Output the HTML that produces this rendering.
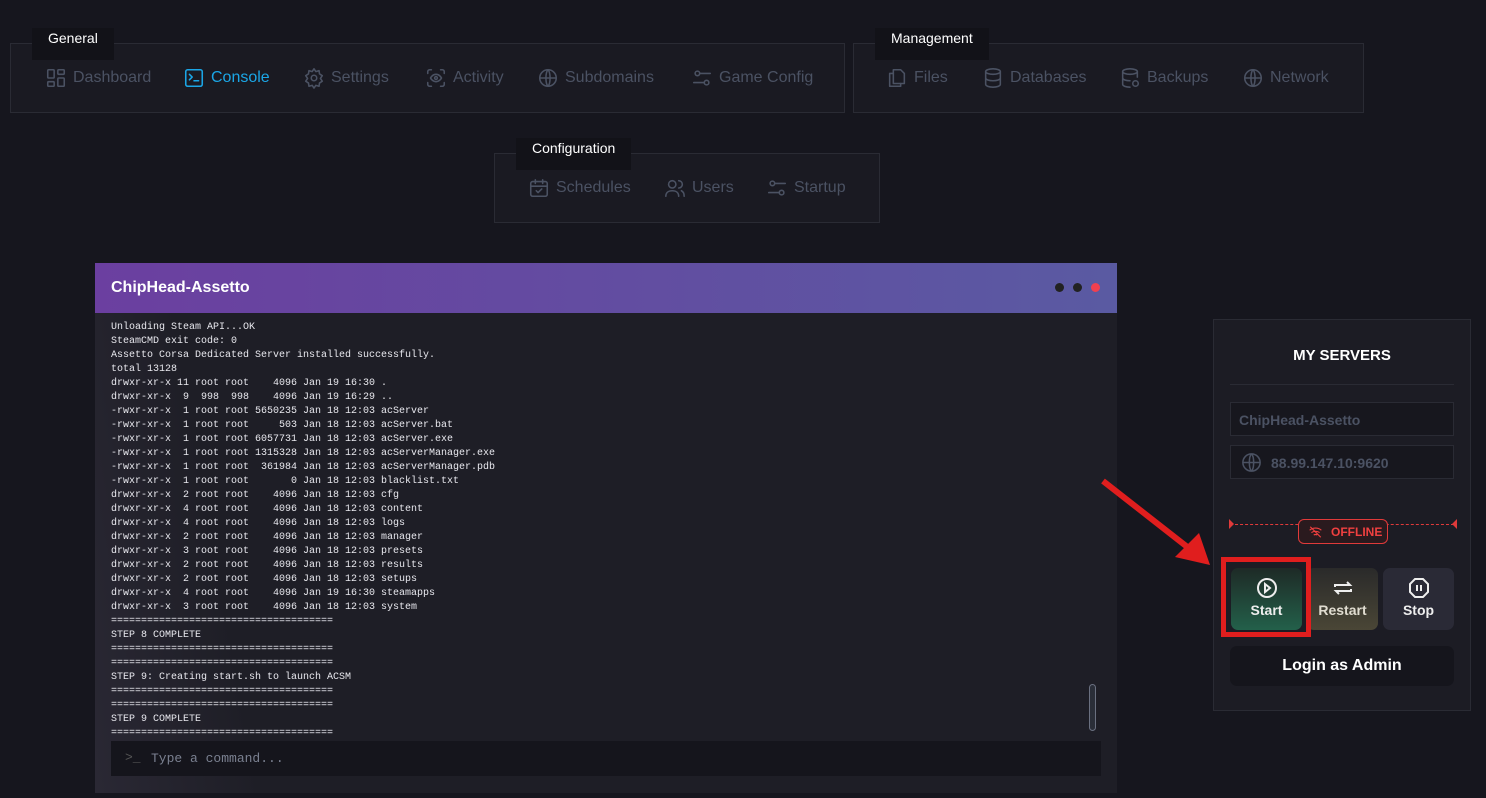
<!DOCTYPE html>
<html><head><meta charset="utf-8"><style>
*{box-sizing:border-box;margin:0;padding:0}
body{width:1486px;height:798px;background:#16161e;font-family:"Liberation Sans",sans-serif;position:relative;overflow:hidden}
.box{position:absolute;border:1px solid #2a2b34;background:#1a1a22}
.lbl{position:absolute;top:-16px;background:#121218;color:#fff;font-size:14px;padding:2px 16px 14px;}
.it{position:absolute;top:23px;display:flex;align-items:center;color:#4b5263;font-size:16px;gap:6px}
.it svg{width:22px;height:22px;fill:none;stroke:#4b5263;stroke-width:1.7;stroke-linecap:round;stroke-linejoin:round}
.act{color:#1ba6e6}.act svg{stroke:#1ba6e6}
.con{position:absolute;left:95px;top:263px;width:1022px;height:530px;background:linear-gradient(80deg,#2a2834 0%,#1e1e26 15%,#1e1e26 100%)}
.hd{height:50px;background:linear-gradient(90deg,#6b3fa0,#5a5aa2);color:#fff;font-weight:bold;font-size:16px;padding:16px 16px}
.dot{position:absolute;top:20px;width:9px;height:9px;border-radius:50%;background:#222}
pre{position:absolute;left:16px;top:58px;font-family:"Liberation Mono",monospace;font-size:10px;line-height:14px;color:#e8e8ee}
.inp{position:absolute;left:16px;top:478px;width:990px;height:35px;background:#15151c;color:#7a8090;font-family:"Liberation Mono",monospace;font-size:13px;padding:10px 40px}
.pn{position:absolute;left:1213px;top:319px;width:258px;height:392px;background:#1c1c24;border:1px solid #2a2b34}
.fld{position:absolute;left:16px;width:224px;height:34px;border:1px solid #2a2b34;background:#17171e;color:#4b5263;font-weight:bold;font-size:14px;padding:9px 8px}
.bt{position:absolute;top:248px;width:71px;height:62px;border-radius:7px;color:#eee;font-weight:bold;font-size:14px;text-align:center;padding-top:8px}
.bt svg{display:block;margin:0 auto 2px;width:24px;height:24px;fill:none;stroke:#eee;stroke-width:2}
</style></head><body>
<div class="box" style="left:10px;top:43px;width:835px;height:70px"><div class="lbl" style="left:21px">General</div>
<div class="it" style="left:34px"><svg viewBox="0 0 24 24"><rect x="3" y="3" width="7" height="9" rx="1"/><rect x="14" y="3" width="7" height="5" rx="1"/><rect x="14" y="12" width="7" height="9" rx="1"/><rect x="3" y="16" width="7" height="5" rx="1"/></svg>Dashboard</div>
<div class="it act" style="left:172px"><svg viewBox="0 0 24 24"><rect x="3" y="3" width="18" height="18" rx="2"/><path d="M7 8l3 3-3 3M12 15h5"/></svg>Console</div>
<div class="it" style="left:292px"><svg viewBox="0 0 24 24"><circle cx="12" cy="12" r="3"/><path d="M12 2l2 3 3.5-1 .5 3.5 3 2-2 3 2 3-3 2-.5 3.5-3.5-1-2 3-2-3-3.5 1-.5-3.5-3-2 2-3-2-3 3-2 .5-3.5 3.5 1z"/></svg>Settings</div>
<div class="it" style="left:414px"><svg viewBox="0 0 24 24"><path d="M3 7V5a2 2 0 012-2h2M17 3h2a2 2 0 012 2v2M21 17v2a2 2 0 01-2 2h-2M7 21H5a2 2 0 01-2-2v-2"/><path d="M6 12s2-4 6-4 6 4 6 4-2 4-6 4-6-4-6-4z"/><circle cx="12" cy="12" r="1.5"/></svg>Activity</div>
<div class="it" style="left:526px"><svg viewBox="0 0 24 24"><circle cx="12" cy="12" r="9"/><path d="M3 12h18M12 3c3 3 3 15 0 18M12 3c-3 3-3 15 0 18"/></svg>Subdomains</div>
<div class="it" style="left:680px"><svg viewBox="0 0 24 24"><circle cx="7" cy="7" r="2.5"/><path d="M10 7h11M3 17h11"/><circle cx="17" cy="17" r="2.5"/></svg>Game Config</div>
</div>
<div class="box" style="left:853px;top:43px;width:511px;height:70px"><div class="lbl" style="left:21px">Management</div>
<div class="it" style="left:32px"><svg viewBox="0 0 24 24"><path d="M8 7V3h8l4 4v11H8z"/><path d="M8 7H4v14h12v-3"/></svg>Files</div>
<div class="it" style="left:128px"><svg viewBox="0 0 24 24"><ellipse cx="12" cy="5" rx="8" ry="3"/><path d="M4 5v14c0 1.7 3.6 3 8 3s8-1.3 8-3V5M4 12c0 1.7 3.6 3 8 3s8-1.3 8-3"/></svg>Databases</div>
<div class="it" style="left:265px"><svg viewBox="0 0 24 24"><ellipse cx="12" cy="5" rx="8" ry="3"/><path d="M4 5v14c0 1.7 3.6 3 8 3M20 5v6M4 12c0 1.7 3.6 3 8 3"/><path d="M15 18a3 3 0 106 0 3 3 0 00-6 0"/></svg>Backups</div>
<div class="it" style="left:388px"><svg viewBox="0 0 24 24"><circle cx="12" cy="12" r="9"/><path d="M3 12h18M12 3c3 3 3 15 0 18M12 3c-3 3-3 15 0 18"/></svg>Network</div>
</div>
<div class="box" style="left:494px;top:153px;width:386px;height:70px"><div class="lbl" style="left:21px">Configuration</div>
<div class="it" style="left:33px"><svg viewBox="0 0 24 24"><rect x="3" y="5" width="18" height="16" rx="2"/><path d="M8 3v4M16 3v4M3 10h18M9 15l2 2 4-4"/></svg>Schedules</div>
<div class="it" style="left:169px"><svg viewBox="0 0 24 24"><circle cx="9" cy="8" r="4"/><path d="M2 21c0-4 3-6 7-6s7 2 7 6M16 4a4 4 0 010 8M19 15c2 1 3 3 3 6"/></svg>Users</div>
<div class="it" style="left:271px"><svg viewBox="0 0 24 24"><circle cx="7" cy="7" r="2.5"/><path d="M10 7h11M3 17h11"/><circle cx="17" cy="17" r="2.5"/></svg>Startup</div>
</div>
<div class="con"><div class="hd">ChipHead-Assetto</div>
<div class="dot" style="position:fixed;left:1055px;top:283px"></div>
<div class="dot" style="position:fixed;left:1073px;top:283px"></div>
<div class="dot" style="position:fixed;left:1091px;top:283px;background:#f04050"></div>
<pre>Unloading Steam API...OK
SteamCMD exit code: 0
Assetto Corsa Dedicated Server installed successfully.
total 13128
drwxr-xr-x 11 root root    4096 Jan 19 16:30 .
drwxr-xr-x  9  998  998    4096 Jan 19 16:29 ..
-rwxr-xr-x  1 root root 5650235 Jan 18 12:03 acServer
-rwxr-xr-x  1 root root     503 Jan 18 12:03 acServer.bat
-rwxr-xr-x  1 root root 6057731 Jan 18 12:03 acServer.exe
-rwxr-xr-x  1 root root 1315328 Jan 18 12:03 acServerManager.exe
-rwxr-xr-x  1 root root  361984 Jan 18 12:03 acServerManager.pdb
-rwxr-xr-x  1 root root       0 Jan 18 12:03 blacklist.txt
drwxr-xr-x  2 root root    4096 Jan 18 12:03 cfg
drwxr-xr-x  4 root root    4096 Jan 18 12:03 content
drwxr-xr-x  4 root root    4096 Jan 18 12:03 logs
drwxr-xr-x  2 root root    4096 Jan 18 12:03 manager
drwxr-xr-x  3 root root    4096 Jan 18 12:03 presets
drwxr-xr-x  2 root root    4096 Jan 18 12:03 results
drwxr-xr-x  2 root root    4096 Jan 18 12:03 setups
drwxr-xr-x  4 root root    4096 Jan 19 16:30 steamapps
drwxr-xr-x  3 root root    4096 Jan 18 12:03 system
=====================================
STEP 8 COMPLETE
=====================================
=====================================
STEP 9: Creating start.sh to launch ACSM
=====================================
=====================================
STEP 9 COMPLETE
=====================================</pre>
<div style="position:absolute;left:994px;top:421px;width:7px;height:47px;border:1px solid #6a7080;border-radius:4px;background:#2a2e38"></div>
<div class="inp"><span style="position:absolute;left:14px;top:9px;color:#555">&gt;_</span>Type a command...</div>
</div>
<div class="pn">
<div style="position:absolute;top:27px;width:100%;text-align:center;color:#fff;font-weight:bold;font-size:15px">MY SERVERS</div>
<div style="position:absolute;left:16px;top:64px;width:224px;height:1px;background:#2a2b34"></div>
<div class="fld" style="top:82px">ChipHead-Assetto</div>
<div class="fld" style="top:125px;padding-left:40px"><svg style="position:absolute;left:9px;top:5px;width:23px;height:23px;fill:none;stroke:#4b5263;stroke-width:1.6" viewBox="0 0 24 24"><circle cx="12" cy="12" r="9"/><path d="M3 12h18M12 3c3 3 3 15 0 18M12 3c-3 3-3 15 0 18"/></svg>88.99.147.10:9620</div>
<div style="position:absolute;left:16px;top:204px;width:224px;border-top:1px dashed #e03a3a"></div>
<div style="position:absolute;left:15px;top:199px;width:0;height:0;border-top:5px solid transparent;border-bottom:5px solid transparent;border-left:5px solid #e03a3a"></div>
<div style="position:absolute;left:238px;top:199px;width:0;height:0;border-top:5px solid transparent;border-bottom:5px solid transparent;border-right:5px solid #e03a3a"></div>
<div style="position:absolute;left:84px;top:199px;width:90px;height:25px;border:1px solid #e03a3a;border-radius:6px;background:#2a1a1e;color:#f04040;font-weight:bold;font-size:12px;padding:5px 0 0 32px">OFFLINE<svg style="position:absolute;left:9px;top:5px" width="15" height="14" viewBox="0 0 24 24" fill="none" stroke="#f04040" stroke-width="2"><path d="M2 9c5-5 15-5 20 0M5 13c4-3 10-3 14 0M9 17c2-1 4-1 6 0M3 3l18 18"/></svg></div>
<div class="bt" style="left:17px;background:linear-gradient(#1e2a26,#23604a)"><svg viewBox="0 0 24 24"><circle cx="12" cy="12" r="9"/><path d="M10 8l5 4-5 4z"/></svg>Start</div>
<div class="bt" style="left:93px;background:linear-gradient(#2a2a2a,#4a4636);color:#e0dcd0"><svg viewBox="0 0 24 24"><path d="M4 11V9h15l-3-3M20 13v2H5l3 3"/></svg>Restart</div>
<div class="bt" style="left:169px;background:#2a2a36"><svg viewBox="0 0 24 24"><path d="M8 3h8l5 5v8l-5 5H8l-5-5V8z"/><path d="M10 9v6M14 9v6"/></svg>Stop</div>
<div style="position:absolute;left:16px;top:326px;width:224px;height:40px;background:#15151c;border-radius:7px;color:#fff;font-weight:bold;font-size:16px;text-align:center;padding-top:11px">Login as Admin</div>
</div>
<div style="position:absolute;left:1221px;top:557px;width:90px;height:80px;border:5px solid #e01e1e"></div>
<svg style="position:absolute;left:1095px;top:475px" width="125" height="95"><path d="M8 6L100 78" stroke="#e01e1e" stroke-width="6"/><path d="M115 90L80 82 104 58z" fill="#e01e1e"/></svg>
</body></html>
